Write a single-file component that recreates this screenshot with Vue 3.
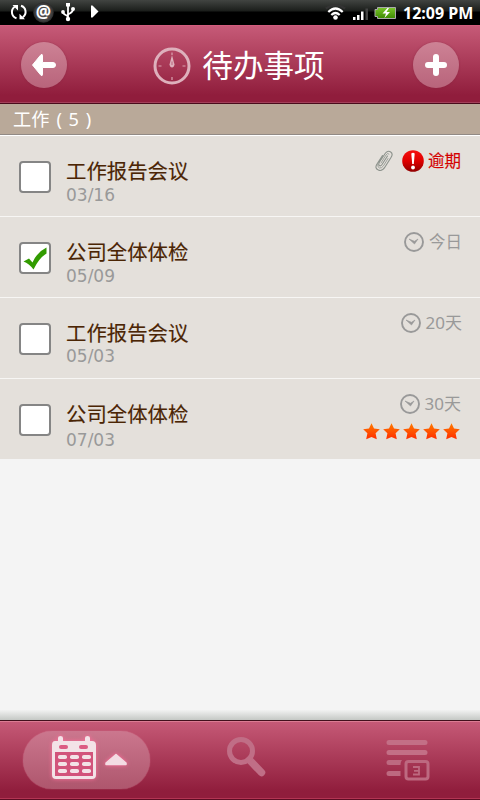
<script setup>
const tasks = [
  { title: '工作报告会议', date: '03/16', due: '逾期', overdue: true, clip: true },
  { title: '公司全体体检', date: '05/09', due: '今日', done: true },
  { title: '工作报告会议', date: '05/03', due: '20天', high: true },
  { title: '公司全体体检', date: '07/03', due: '30天', stars: 5, low: true },
]
</script>

<template>
  <div class="screen">
    <div class="status">
      <svg class="status-left" width="110" height="25" viewBox="0 0 110 25">
        <defs>
          <radialGradient id="at"><stop offset="0" stop-color="#555" /><stop offset=".75" stop-color="#444" /><stop offset="1" stop-color="#2a2a2a" /></radialGradient>
        </defs>
        <g fill="none" stroke="#fff" stroke-width="2">
          <path d="M16.500 18.200A6.400 6.400 0 0 1 14.700 6.800M21 5.800A6.400 6.400 0 0 1 22.800 17.200" />
        </g>
        <path d="M12.500 5h5.500v5.500zM19.500 13.800v5.500H25z" fill="#fff" />
        <circle cx="43.500" cy="12.500" r="10.300" fill="url(#at)" />
        <text x="43.500" y="17.500" text-anchor="middle" class="at">@</text>
        <g stroke="#fff" stroke-width="1.800" fill="none">
          <path d="M68 5v14M68 16.500c-2-2-5-1.500-5-5M68 14.500c2-1.500 5-2 5-5" />
        </g>
        <g fill="#fff"><rect x="66" y="3" width="4" height="3.500" /><circle cx="68" cy="19" r="2.200" /><circle cx="63" cy="12" r="1.900" /><circle cx="73" cy="9" r="2" /><path d="M91 5.500h1.500l6 6-6 6H91z" /></g>
      </svg>
      <div class="status-right">
        <svg width="74" height="25" viewBox="0 0 74 25">
          <defs>
            <linearGradient id="bat" x2="0" y2="1"><stop offset="0" stop-color="#7bc62b" /><stop offset="1" stop-color="#3c8a00" /></linearGradient>
          </defs>
          <g fill="none" stroke-width="2.200">
            <path d="M.8 8.500Q10.500 1.500 20.200 8.500" stroke="#333" />
            <path d="M3.300 12Q10.500 5 17.700 12" stroke="#fff" />
            <path d="M6.300 15Q10.500 11 14.700 15" stroke="#fff" />
          </g>
          <circle cx="10.500" cy="17.500" r="2.300" fill="#fff" />
          <g fill="#fff"><path d="M28 17h2.500v3H28zM32 15h2.500v5H32zM36 11.500h2.500V20H36z" /><path d="M40.500 8.500H43V20h-2.500z" fill="#444" /></g>
          <path d="M52.500 7.500H70.500V18.500H52.500V16.500H50V9.500H52.500Z" fill="url(#bat)" stroke="#aaa" />
          <path d="M62.500 8l-5 5.500h3.500l-1.500 4.500 5.500-6h-3.500l2.500-4z" fill="#fff" />
        </svg>
        <span class="time">12:09 PM</span>
      </div>
    </div>

    <header class="bar header">
      <button class="round">
        <svg width="46" height="46" viewBox="0 0 46 46"><path d="M11.500 23L19.500 13.200Q21.500 11 21.500 14V20.500H32a2.500 2.500 0 0 1 0 5H21.500v6.500Q21.500 35 19.500 32.800Z" fill="#fff" stroke="#fff" stroke-linejoin="round" /></svg>
      </button>
      <h1>
        <svg width="38" height="38" viewBox="0 0 38 38">
          <circle cx="19" cy="19" r="17" fill="none" stroke="#deb0bc" stroke-width="3" />
          <path d="M19 5.500v2.500M19 30v3M5.500 19h3M29.500 19h3" stroke="#dba4b2" stroke-width="1.200" />
          <path d="M19 8l2.500 9.500q-.5 3-2.500 3t-2.500-3z" fill="#deb0bc" /><path d="M19 14.500v3.500" stroke="#b9657c" />
        </svg>
        <span>待办事项</span>
      </h1>
      <button class="round">
        <svg width="46" height="46" viewBox="0 0 46 46"><path d="M23 15v16M15 23h16" stroke="#fff" stroke-width="6" stroke-linecap="round" /></svg>
      </button>
    </header>

    <div class="section"><span>工作</span><span class="count">( 5 )</span></div>

    <main>
      <div v-for="(t, i) in tasks" :key="i" class="row">
        <div class="box">
          <svg v-if="t.done" width="28" height="28" viewBox="0 0 28 28"><path d="M2.500 17.500L8 14.500l3.500 4Q16 8 25.500 3.500v6Q18 14 12.500 25.500Q8 19.500 2.500 17.500Z" fill="#319b00" /></svg>
        </div>
        <div class="info">
          <div class="title">{{ t.title }}</div>
          <div class="date" :class="{ low: t.low, high: t.high }">{{ t.date }}</div>
        </div>
        <div class="meta" :class="{ inset: t.overdue || t.low }">
          <div class="due" :class="{ overdue: t.overdue }">
            <svg v-if="t.clip" class="clip" width="18" height="22" viewBox="0 0 18 22">
              <g fill="none" stroke="#8c928c" stroke-width="1.100" stroke-linecap="round">
                <path d="M12.500 6L7 14.500Q5.500 16.500 4.300 15.500T4.500 12L10.500 3Q13 .2 15.700 2T16 7.500L10 17Q7 21.700 3.300 20T1.700 14.500L7.500 5.500" />
                <path d="M13 8.500L8.500 15.800Q6.500 18.500 4.500 18T2.700 14.500M14 4Q12.500 2.500 11 5L6 13" stroke-width=".8" />
              </g>
            </svg>
            <svg v-if="t.overdue" width="22" height="22" viewBox="0 0 22 22">
              <defs><linearGradient id="red" x2="0" y2="1"><stop offset="0" stop-color="#f51010" /><stop offset=".5" stop-color="#df0000" /><stop offset="1" stop-color="#900000" /></linearGradient></defs>
              <circle cx="11" cy="11" r="10.800" fill="url(#red)" /><path d="M9.300 3.500Q11 2.200 12.700 3.500L11.800 14h-1.600z" fill="#fff" /><circle cx="11" cy="17.500" r="1.900" fill="#fff" />
            </svg>
            <svg v-else width="20" height="20" viewBox="0 0 20 20"><circle cx="10" cy="10" r="9" fill="none" stroke="#999" stroke-width="1.900" /><path d="M5 7l5.500 2.300L14 7l-3.500 5z" fill="#999" stroke="#999" stroke-width=".6" /></svg>
            <span>{{ t.due }}</span>
          </div>
          <div v-if="t.stars" class="stars">
            <svg v-for="s in t.stars" :key="s" width="17" height="17" viewBox="0 0 17 17">
              <defs><linearGradient id="star" x2="0" y2="1"><stop offset="0" stop-color="#ff7b00" /><stop offset="1" stop-color="#ff2c00" /></linearGradient></defs>
              <path d="M8.500.3L11 5.600l5.800.6-4.200 4.100 1.200 6-5.300-2.400-5.300 2.400 1.200-6L.2 6.200 6 5.600z" fill="url(#star)" />
            </svg>
          </div>
        </div>
      </div>
    </main>
    <div class="fade"></div>

    <footer class="bar footer">
      <button class="pill">
        <svg class="glow" width="46" height="44" viewBox="0 0 46 44">
          <path d="M4 5h3V2q0-2 2.500-2T12 2v3h22V2q0-2 2.500-2T39 2v3h2q4 0 4 4v30q0 4-4 4H5q-4 0-4-4V9q0-4 3-4z" fill="#f3e2e7" />
          <path d="M4 16h38v24H4z" fill="#d2537b" />
          <g fill="#dc5b83"><rect x="8" y="9" width="9" height="4" rx="2" /><rect x="28" y="9" width="9" height="4" rx="2" /></g>
          <g fill="#f3e2e7">
            <template v-for="y in [19, 26, 33]" :key="y">
              <rect v-for="x in [7, 19, 31]" :key="x" :x="x" :y="y" width="9" height="4" rx="1.800" />
            </template>
          </g>
        </svg>
        <svg class="glow" width="24" height="13" viewBox="0 0 24 13"><path d="M12 1.500L22 10v1.500H2V10z" fill="#f3dce3" stroke="#f3dce3" stroke-width="1.500" stroke-linejoin="round" /></svg>
      </button>
      <svg class="search" width="42" height="44" viewBox="0 0 42 44"><g fill="none" stroke="#c06e86"><circle cx="15" cy="15" r="11.500" stroke-width="5" /><path d="M23.500 24l12 12.500" stroke-width="7.500" stroke-linecap="round" /><path d="M21.500 22.500l3 3" stroke-width="6" /></g></svg>
      <svg class="listing" width="44" height="44" viewBox="0 0 44 44">
        <g stroke="#c36f86" stroke-width="5" stroke-linecap="round"><path d="M3 4.500h36M3 14.500h36" /></g>
        <g fill="#bd6980"><path d="M3 22h13q-1.500 2-1.500 5H3q-2.500 0-2.500-2.500T3 22zM3 33h11.500v5H3q-2.500 0-2.500-2.500T3 33z" /></g>
        <rect x="20" y="23.500" width="22" height="17.500" rx="2.500" fill="none" stroke="#bd6980" stroke-width="3" />
        <path d="M27 29h6v7.500H27M28 32.800h5" fill="none" stroke="#bd6980" stroke-width="1.800" />
      </svg>
    </footer>
  </div>
</template>

<style>
body { margin: 0; }
</style>

<style scoped>
.screen { width: 480px; height: 800px; display: flex; flex-direction: column; background: #f4f4f4; font-family: "Noto Sans", "Noto Sans CJK SC", sans-serif; overflow: hidden; }
.screen > * { flex-shrink: 0; box-sizing: border-box; }
svg { display: block; flex-shrink: 0; }
button { border: 0; padding: 0; margin: 0; }
.status { height: 25px; display: flex; justify-content: space-between; background: linear-gradient(#414441, #1b1e1b 11px, #000 12px); }
.at { font: bold 17px "Noto Sans", sans-serif; fill: #fff; }
.status-right { display: flex; padding-right: 7px; gap: 4px; }
.time { width: 70px; font: bold 16px/26px "Noto Sans", sans-serif; color: #fff; white-space: nowrap; }
.bar { display: flex; background: linear-gradient(#c65a78, #bd506d 15%, #901d3c 90%); }
.header { height: 79px; padding: 0 21px; justify-content: space-between; border-top: 1px solid #d35d7e; border-bottom: 1px solid #490b1c; box-shadow: inset 0 -1px #a3405a; }
.round { width: 46px; height: 46px; margin-top: 16px; border-radius: 50%; background: linear-gradient(#cd8295, #b8647b); box-shadow: 0 0 2px #7c243c88; }
h1 { margin: 21px 2px 0 0; display: flex; gap: 11px; font-weight: 400; font-size: 30.600px; line-height: 35px; color: #fff; font-family: "Noto Sans CJK SC", sans-serif; }
.section { height: 32px; display: flex; gap: 7px; padding-left: 13px; background: #b9a999; color: #fff; font-size: 18.200px; line-height: 31px; border-bottom: 1px solid #fff; box-shadow: inset 0 -1px #918a85; }
.count { letter-spacing: 1px; }
.row { height: 81px; box-sizing: border-box; display: flex; padding: 0 19px; background: #e4e0db; border-bottom: 1px solid #f7f6f4; }
.row:last-child { height: 80px; border: 0; }
.box { box-sizing: border-box; width: 32px; height: 32px; margin-top: 25px; border: 2px solid #858585; border-radius: 4px; background: #fff; }
.info { margin-left: 15px; padding-top: 21px; flex: 1; }
.title { font: 400 20.4px/26px "Noto Sans CJK SC", sans-serif; color: #4b2504; -webkit-text-stroke: .15px #4b2504; }
.date { margin-top: 3px; font: 17px/19px "DejaVu Sans", sans-serif; color: #999; }
.date.high { margin-top: 2px; }
.date.low { margin-top: 5px; }
.meta { display: flex; flex-direction: column; align-items: flex-end; padding-top: 14px; margin-right: -1px; }
.meta.inset { margin-right: 0; }
.due { display: flex; align-items: center; gap: 5px; height: 22px; color: #999; font: 16.500px/22px "Noto Sans", "Noto Sans CJK SC", sans-serif; }
.row:nth-child(n + 3) .due { font-size: 17px; }
.due.overdue { color: #d40000; gap: 4px; -webkit-text-stroke: .15px #d40000; }
.clip { margin-right: 5px; }
.stars { display: flex; gap: 3px; margin: 8px 1px 0 0; }
.fade { margin-top: auto; height: 10px; background: linear-gradient(#f2f2f2, #c5c8c5); }
.footer { height: 80px; align-items: flex-start; padding-left: 23px; border-top: 1px solid #42101d; border-bottom: 1px solid #5c0d23; box-shadow: inset 0 1px #dc7c93, inset 0 -1px #b33553; }
.pill { width: 127px; height: 58px; margin-top: 10px; border-radius: 29px; background: linear-gradient(#cb778e, #ae566d); box-shadow: 0 0 1px #e58da5; display: flex; padding: 5px 0 0 28px; box-sizing: border-box; gap: 7px; }
.glow { filter: drop-shadow(0 0 2px #ff6e9b); }
.glow + .glow { margin-top: 17px; }
.search { margin: 15px 0 0 76px; }
.listing { margin: 17px 0 0 118px; }
</style>
